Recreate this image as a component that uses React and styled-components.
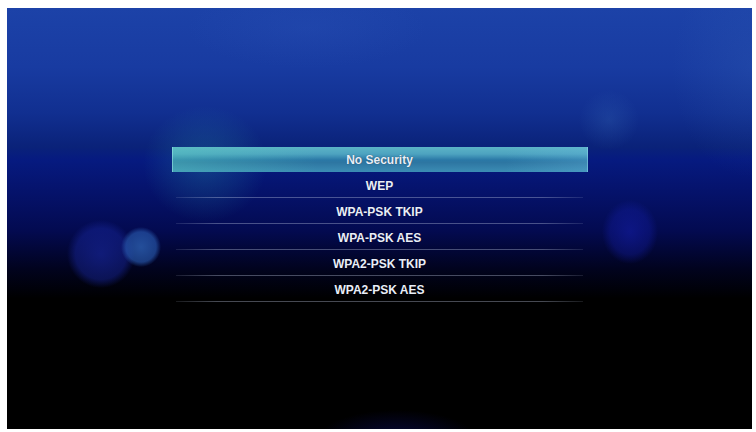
import React from "react";
import styled, { createGlobalStyle } from "styled-components";

const GlobalStyle = createGlobalStyle`
  html, body {
    margin: 0;
    padding: 0;
    background: #ffffff;
  }
  body {
    font-family: "Liberation Sans", Arial, sans-serif;
  }
`;

const Page = styled.div`
  width: 756px;
  height: 432px;
  padding: 8px 4px 3px 7px;
  box-sizing: border-box;
`;

// tv screen with blue sky + bokeh lights baked into the background
const Screen = styled.div`
  width: 745px;
  height: 421px;
  display: flex;
  flex-direction: column;
  align-items: center;
  padding-top: 139px;
  box-sizing: border-box;
  overflow: hidden;
  background:
    radial-gradient(circle 20px at 134px 239px, rgba(44, 96, 178, 0.8) 0%, rgba(40, 90, 175, 0.65) 75%, rgba(40, 90, 175, 0) 100%),
    radial-gradient(circle 34px at 94px 246px, rgba(22, 36, 150, 0.7) 0%, rgba(22, 36, 150, 0.5) 75%, rgba(22, 36, 150, 0) 100%),
    radial-gradient(ellipse 28px 32px at 623px 224px, rgba(18, 28, 160, 0.65) 0%, rgba(18, 28, 160, 0.4) 70%, rgba(18, 28, 160, 0) 100%),
    radial-gradient(ellipse 62px 58px at 198px 156px, rgba(40, 150, 170, 0.3) 0%, rgba(40, 140, 170, 0.14) 60%, rgba(40, 140, 170, 0) 100%),
    radial-gradient(ellipse 30px 30px at 602px 112px, rgba(70, 130, 200, 0.2) 0%, rgba(70, 130, 200, 0) 100%),
    radial-gradient(ellipse 80px 110px at 745px 60px, rgba(60, 110, 190, 0.2) 0%, rgba(60, 110, 190, 0) 100%),
    radial-gradient(ellipse 80px 30px at 390px 432px, rgba(12, 14, 100, 0.6) 0%, rgba(12, 14, 100, 0) 100%),
    radial-gradient(ellipse 120px 40px at 300px 20px, rgba(50, 90, 190, 0.2) 0%, rgba(50, 90, 190, 0) 100%),
    linear-gradient(
      to bottom,
      #1c42a8 0%,
      #183ba1 14%,
      #112f90 25%,
      #0a2279 33%,
      #061a80 36%,
      #05126a 44%,
      #030a50 53%,
      #01031e 62%,
      #000000 69%,
      #000000 100%
    );
`;

const Menu = styled.ul`
  list-style: none;
  margin: 0;
  padding: 0;
  width: 416px;
  display: flex;
  flex-direction: column;
`;

const Item = styled.li`
  position: relative;
  height: ${(p) => (p.$active ? "25px" : "26px")};
  display: flex;
  align-items: center;
  justify-content: center;
  font-size: 12px;
  font-weight: 700;
  color: #e9eef8;
  text-shadow: 0 0 1px rgba(0, 0, 0, 0.5);
  box-sizing: border-box;
  padding-top: ${(p) => (p.$active ? "0" : "2px")};
  background: ${(p) =>
    p.$active
      ? `linear-gradient(to right, rgba(90, 210, 190, 0.35) 0%, rgba(90, 210, 190, 0) 35%, rgba(0,0,0,0) 80%, rgba(110, 190, 230, 0.25) 100%),
         linear-gradient(to bottom, #5cb3c6 0%, #4da3c0 28%, #2a78a6 52%, #2d76a2 62%, #3c8db4 100%)`
      : "transparent"};
  box-shadow: ${(p) =>
    p.$active ? "inset 1px 0 0 rgba(150, 230, 230, 0.6), inset -1px 0 0 rgba(150, 220, 240, 0.5)" : "none"};

  &::after {
    content: "";
    display: ${(p) => (p.$active ? "none" : "block")};
    position: absolute;
    left: 4px;
    right: 5px;
    bottom: 0;
    height: 1px;
    background: linear-gradient(
      to right,
      rgba(200, 210, 235, 0.12),
      rgba(200, 210, 235, 0.35) 10%,
      rgba(200, 210, 235, 0.35) 90%,
      rgba(200, 210, 235, 0.12)
    );
  }
`;

const options = [
  "No Security",
  "WEP",
  "WPA-PSK TKIP",
  "WPA-PSK AES",
  "WPA2-PSK TKIP",
  "WPA2-PSK AES",
];

const App = () => {
  return (
    <>
      <GlobalStyle />
      <Page>
        <Screen>
          <Menu>
            {options.map((opt, i) => (
              <Item key={opt} $active={i === 0}>
                {opt}
              </Item>
            ))}
          </Menu>
        </Screen>
      </Page>
    </>
  );
};

export default App;
